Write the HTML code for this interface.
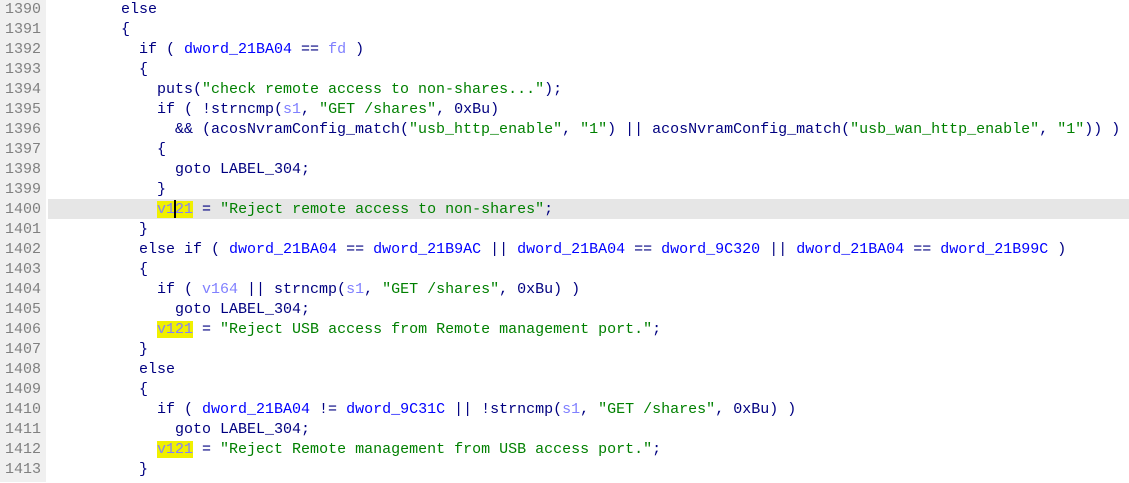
<!DOCTYPE html>
<html><head><meta charset="utf-8"><style>
body{margin:0;width:1129px;height:482px;overflow:hidden;background:#fff;font-family:"Liberation Mono",monospace;font-size:15px;}
#g{position:absolute;left:0;top:0;width:46px;height:482px;background:#f0f0f0;}
#hl{position:absolute;left:48px;top:199px;width:1081px;height:20px;background:#e6e6e6;}
#w{position:absolute;left:0;top:1px;width:1129px;height:482px;}
.l{position:absolute;height:20px;line-height:20px;white-space:pre;color:#000080;}
.n{left:5px;color:#808080;}
.c{left:121px;}
.d{color:#0000ff}.v{color:#8080ff}.s{color:#008000}
.y{background:#f0f000}
.cur{display:inline-block;width:2px;height:18px;background:#000;vertical-align:middle;margin:0 -1px;}
</style></head><body>
<div id="g"></div><div id="hl"></div>
<div id="w">
<div class="l n" style="top:-1px">1390</div><div class="l c" style="top:-1px">else</div>
<div class="l n" style="top:19px">1391</div><div class="l c" style="top:19px">{</div>
<div class="l n" style="top:39px">1392</div><div class="l c" style="top:39px">  if ( <span class="d">dword_21BA04</span> == <span class="v">fd</span> )</div>
<div class="l n" style="top:59px">1393</div><div class="l c" style="top:59px">  {</div>
<div class="l n" style="top:79px">1394</div><div class="l c" style="top:79px">    puts(<span class="s">"check remote access to non-shares..."</span>);</div>
<div class="l n" style="top:99px">1395</div><div class="l c" style="top:99px">    if ( !strncmp(<span class="v">s1</span>, <span class="s">"GET /shares"</span>, 0xBu)</div>
<div class="l n" style="top:119px">1396</div><div class="l c" style="top:119px">      &amp;&amp; (acosNvramConfig_match(<span class="s">"usb_http_enable"</span>, <span class="s">"1"</span>) || acosNvramConfig_match(<span class="s">"usb_wan_http_enable"</span>, <span class="s">"1"</span>)) )</div>
<div class="l n" style="top:139px">1397</div><div class="l c" style="top:139px">    {</div>
<div class="l n" style="top:159px">1398</div><div class="l c" style="top:159px">      goto LABEL_304;</div>
<div class="l n" style="top:179px">1399</div><div class="l c" style="top:179px">    }</div>
<div class="l n" style="top:199px">1400</div><div class="l c" style="top:199px">    <span class="v y">v1<span class="cur"></span>21</span> = <span class="s">"Reject remote access to non-shares"</span>;</div>
<div class="l n" style="top:219px">1401</div><div class="l c" style="top:219px">  }</div>
<div class="l n" style="top:239px">1402</div><div class="l c" style="top:239px">  else if ( <span class="d">dword_21BA04</span> == <span class="d">dword_21B9AC</span> || <span class="d">dword_21BA04</span> == <span class="d">dword_9C320</span> || <span class="d">dword_21BA04</span> == <span class="d">dword_21B99C</span> )</div>
<div class="l n" style="top:259px">1403</div><div class="l c" style="top:259px">  {</div>
<div class="l n" style="top:279px">1404</div><div class="l c" style="top:279px">    if ( <span class="v">v164</span> || strncmp(<span class="v">s1</span>, <span class="s">"GET /shares"</span>, 0xBu) )</div>
<div class="l n" style="top:299px">1405</div><div class="l c" style="top:299px">      goto LABEL_304;</div>
<div class="l n" style="top:319px">1406</div><div class="l c" style="top:319px">    <span class="v y">v121</span> = <span class="s">"Reject USB access from Remote management port."</span>;</div>
<div class="l n" style="top:339px">1407</div><div class="l c" style="top:339px">  }</div>
<div class="l n" style="top:359px">1408</div><div class="l c" style="top:359px">  else</div>
<div class="l n" style="top:379px">1409</div><div class="l c" style="top:379px">  {</div>
<div class="l n" style="top:399px">1410</div><div class="l c" style="top:399px">    if ( <span class="d">dword_21BA04</span> != <span class="d">dword_9C31C</span> || !strncmp(<span class="v">s1</span>, <span class="s">"GET /shares"</span>, 0xBu) )</div>
<div class="l n" style="top:419px">1411</div><div class="l c" style="top:419px">      goto LABEL_304;</div>
<div class="l n" style="top:439px">1412</div><div class="l c" style="top:439px">    <span class="v y">v121</span> = <span class="s">"Reject Remote management from USB access port."</span>;</div>
<div class="l n" style="top:459px">1413</div><div class="l c" style="top:459px">  }</div>
</div>
</body></html>
